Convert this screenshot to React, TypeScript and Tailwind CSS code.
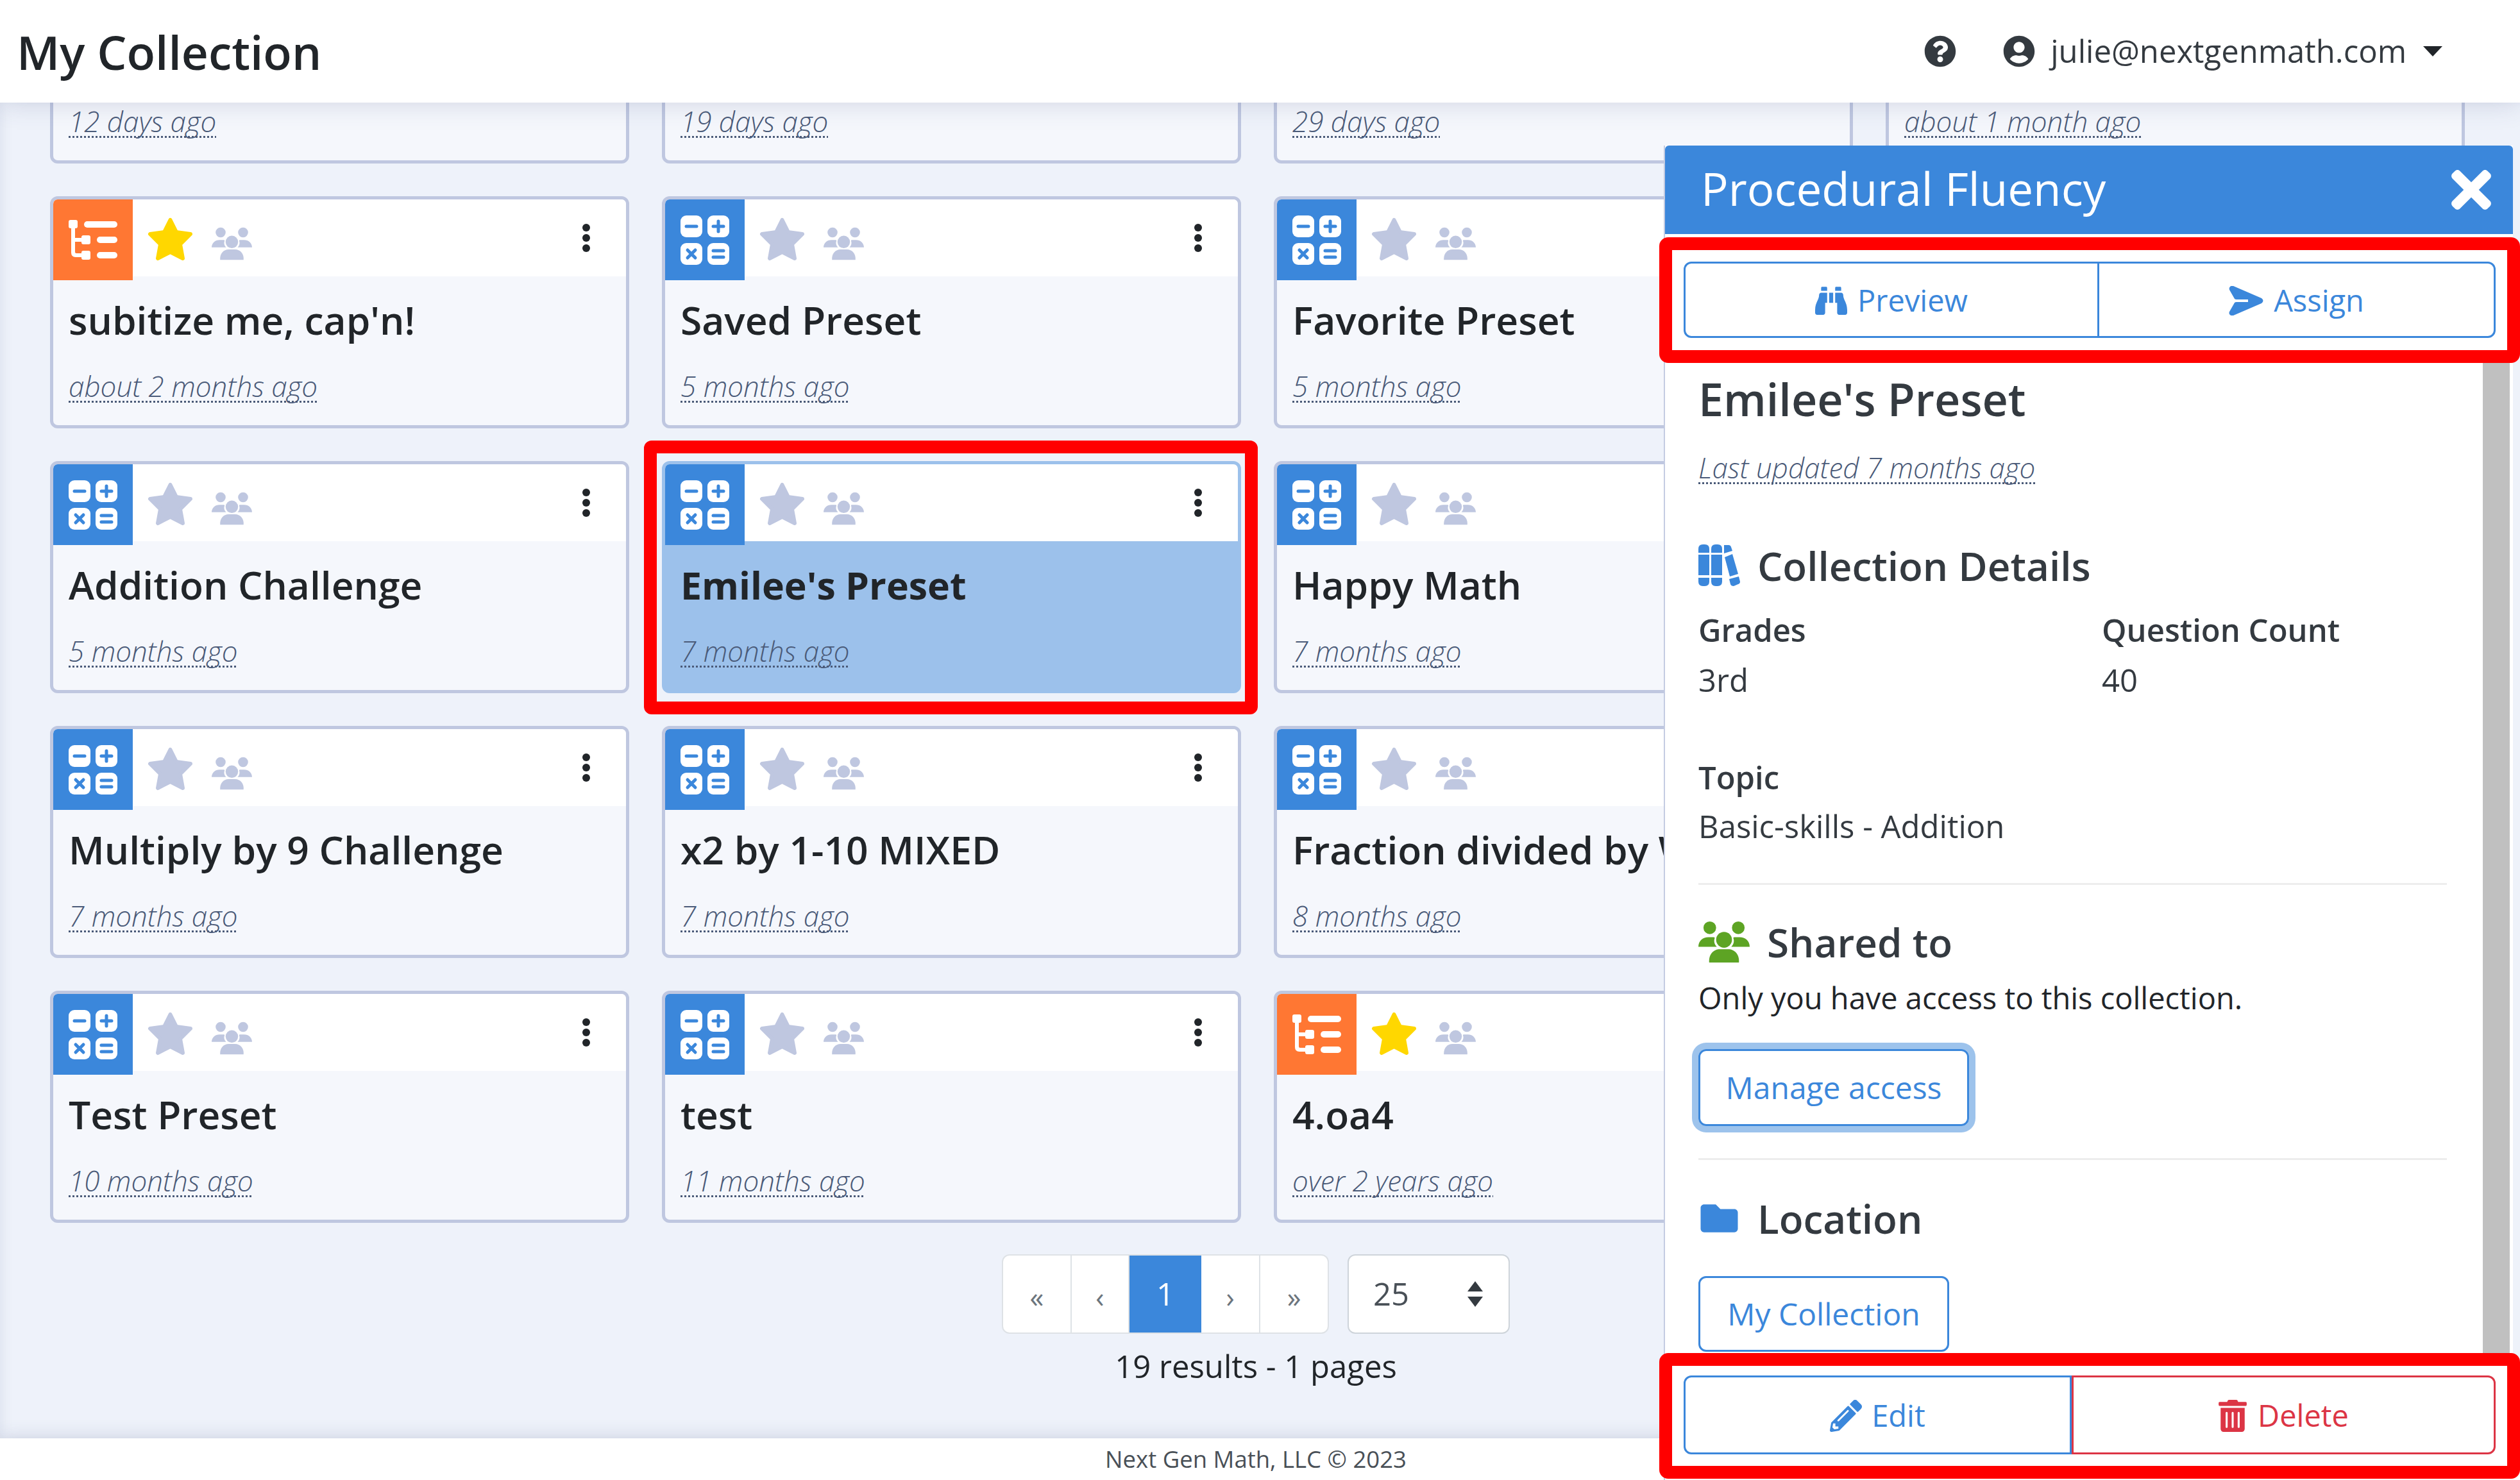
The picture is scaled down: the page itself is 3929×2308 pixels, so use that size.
import { FaBinoculars, FaFolder, FaPencilAlt, FaQuestionCircle, FaTimes, FaTrashAlt, FaUserCircle } from 'react-icons/fa'
import clsx from 'clsx'

type CardData = { title: string; time: string; kind?: 'calc' | 'tree'; fav?: boolean; selected?: boolean }

const CARDS: CardData[] = [
  { title: '', time: '12 days ago' },
  { title: '', time: '19 days ago' },
  { title: '', time: '29 days ago' },
  { title: '', time: 'about 1 month ago' },
  { title: "subitize me, cap'n!", time: 'about 2 months ago', kind: 'tree', fav: true },
  { title: 'Saved Preset', time: '5 months ago' },
  { title: 'Favorite Preset', time: '5 months ago' },
  { title: '', time: '' },
  { title: 'Addition Challenge', time: '5 months ago' },
  { title: "Emilee's Preset", time: '7 months ago', selected: true },
  { title: 'Happy Math', time: '7 months ago' },
  { title: '', time: '' },
  { title: 'Multiply by 9 Challenge', time: '7 months ago' },
  { title: 'x2 by 1-10 MIXED', time: '7 months ago' },
  { title: 'Fraction divided by Whole', time: '8 months ago' },
  { title: '', time: '' },
  { title: 'Test Preset', time: '10 months ago' },
  { title: 'test', time: '11 months ago' },
  { title: '4.oa4', time: 'over 2 years ago', kind: 'tree', fav: true },
]

function CalcIcon() {
  return (
    <svg viewBox="0 0 76 77" className="w-[76px] h-[77px]">
      <rect x="0" y="0" width="34" height="34" rx="9" fill="#fff" />
      <rect x="42" y="0" width="34" height="34" rx="9" fill="#fff" />
      <rect x="0" y="43" width="34" height="34" rx="9" fill="#fff" />
      <rect x="42" y="43" width="34" height="34" rx="9" fill="#fff" />
      <g stroke="#3b87db" strokeWidth="5" strokeLinecap="round">
        <path d="M9 17H25" />
        <path d="M51 17H67M59 9V25" />
        <path d="M11 54L23 66M23 54L11 66" />
        <path d="M51 55H67M51 65H67" />
      </g>
    </svg>
  )
}

function TreeIcon() {
  return (
    <svg viewBox="0 0 76 63" className="w-[76px] h-[63px]" fill="#fff">
      <rect x="0" y="0" width="14" height="13" rx="3" />
      <rect x="20" y="24" width="14" height="14" rx="3" />
      <rect x="20" y="48" width="14" height="14" rx="3" />
      <rect x="24" y="2" width="52" height="10" rx="5" />
      <rect x="44" y="26" width="32" height="10" rx="5" />
      <rect x="44" y="50" width="32" height="10" rx="5" />
      <path d="M4 10H10V28H22V34H10V50Q10 52 12 52H22V58H11Q4 58 4 51Z" />
    </svg>
  )
}

function StarIcon({ fav }: { fav?: boolean }) {
  return (
    <svg viewBox="0 0 71 68" className={clsx('w-[71px] h-[68px]', fav ? 'text-[#ffd700]' : 'text-[#bfc7e0]')}>
      <path
        d="M35.5 4L45 23L67 26L51 42L55 64L35.5 54L16 64L20 42L4 26L26 23Z"
        fill="currentColor"
        stroke="currentColor"
        strokeWidth="6"
        strokeLinejoin="round"
      />
    </svg>
  )
}

function GroupIcon({ className }: { className: string }) {
  return (
    <svg viewBox="0 0 81 65" className={className} fill="currentColor">
      <circle cx="18" cy="10" r="10" />
      <circle cx="63" cy="10" r="10" />
      <circle cx="40.5" cy="29" r="12.5" />
      <path d="M0 40C0 31 7 25 16 25H23C24 25 25 25 26 26C24 31 25 36 29 40Z" />
      <path d="M81 40C81 31 74 25 65 25H58C57 25 56 25 55 26C57 31 56 36 52 40Z" />
      <path d="M17 65C16 52 24 44 34 44H47C57 44 65 52 64 65Z" />
    </svg>
  )
}

function BooksIcon() {
  return (
    <svg viewBox="0 0 65 65" className="w-[65px] h-[65px] shrink-0" fill="#3b87db">
      <path d="M0 13V7Q0 0 7 0H10Q17 0 17 7V13Z" />
      <rect x="0" y="16" width="17" height="32" />
      <path d="M0 52V58Q0 65 7 65H10Q17 65 17 58V52Z" />
      <path d="M20 13V7Q20 0 27 0H30Q37 0 37 7V13Z" />
      <rect x="20" y="16" width="17" height="32" />
      <path d="M20 52V58Q20 65 27 65H30Q37 65 37 58V52Z" />
      <path d="M40 14V1H47Q50 1 51 4L53 10Z" />
      <path d="M41 20L53 15L62 46L49 50Z" />
      <path d="M48 54L63 50L65 58Q65 61 62 62L55 65Q51 65 50 62Z" />
    </svg>
  )
}

function SendIcon() {
  return (
    <svg viewBox="0 0 54 46" className="w-[54px] h-[46px]" fill="currentColor">
      <path d="M2 1Q4 -1 7 0L51 19Q56 23 51 27L7 46Q3 47 1 44Q0 42 1 40L9 26Q10 25 12 25H30V21H12Q10 21 9 20L1 6Q0 3 2 1Z" />
    </svg>
  )
}

function Card({ card }: { card: CardData }) {
  const { title, time, kind = 'calc', fav, selected } = card
  return (
    <div
      className={clsx(
        'relative h-[362px] rounded-[12px] border-[5px]',
        selected ? 'bg-[#9cc1eb] border-[#9cc1eb]' : 'bg-[#f5f7fc] border-[#bfc7e0]'
      )}
    >
      <div className="flex items-start h-[120px] bg-white rounded-t-[7px]">
        <div
          className={clsx(
            'w-[124px] h-[126px] shrink-0 flex items-center justify-center rounded-tl-[7px]',
            kind === 'tree' ? 'bg-[#ff7733]' : 'bg-[#3b87db]'
          )}
        >
          {kind === 'tree' ? <TreeIcon /> : <CalcIcon />}
        </div>
        <div className="ml-[23px] mt-[28px]">
          <StarIcon fav={fav} />
        </div>
        <div className="ml-[29px] mt-[43px]">
          <GroupIcon className="w-[63px] h-[52px] text-[#bfc7e0]" />
        </div>
        <div className="ml-auto mr-[56px] mt-[38px] flex flex-col gap-[4px]">
          <span className="w-[12px] h-[12px] rounded-full bg-[#212529]" />
          <span className="w-[12px] h-[12px] rounded-full bg-[#212529]" />
          <span className="w-[12px] h-[12px] rounded-full bg-[#212529]" />
        </div>
      </div>
      <div className="pl-[24px]">
        <div
          className={clsx(
            'mt-[32px] h-[72px] leading-[72px] whitespace-nowrap text-[#212529]',
            selected ? 'text-[59px] font-bold' : 'text-[60.5px] font-semibold'
          )}
        >
          {title}
        </div>
        <div className="mt-[37px] h-[60px] leading-[60px] whitespace-nowrap">
          <TimeText text={time} />
        </div>
      </div>
      {selected && <div className="absolute -left-[33px] -right-[31px] -top-[37px] -bottom-[38px] border-[20px] border-[#f00] rounded-[12px]" />}
    </div>
  )
}

function TimeText({ text }: { text: string }) {
  return (
    <span className="italic font-light text-[44px] text-[#4a5a78] underline decoration-dotted decoration-[3px] underline-offset-[6px] [text-decoration-skip-ink:none]">
      {text}
    </span>
  )
}

function PageCell({ label, className }: { label: string; className: string }) {
  return (
    <div className={clsx('flex items-center justify-center h-full pt-[8px] text-[44px] text-[#6c757d] border-r-[2.5px] border-[#dee2e6] last:border-r-0', className)}>
      {label}
    </div>
  )
}

function Panel() {
  return (
    <aside className="absolute left-[2594px] right-[11px] top-[227px] bottom-0 flex flex-col bg-white border-l-[2px] border-[#c4cce2]">
      <div className="h-[138px] shrink-0 flex items-center justify-between bg-[#3b87db] rounded-t-[6px] pl-[56px] pr-[20px] text-white">
        <span className="-mt-[5px] text-[71px] leading-none">Procedural Fluency</span>
        <FaTimes className="w-[90px] h-[90px]" />
      </div>
      <div className="shrink-0 pl-[29px] pr-[27px] pt-[43px] pb-[39px]">
        <div className="relative flex h-[119px] rounded-[12px] border-[3px] border-[#3b87db] text-[47px] text-[#3b87db]">
          <div className="w-[645px] pt-[2px] flex items-center justify-center gap-[16px] border-r-[3px] border-[#3b87db]">
            <FaBinoculars className="w-[50px] h-[50px]" />
            Preview
          </div>
          <div className="flex-1 pt-[2px] flex items-center justify-center gap-[16px]">
            <SendIcon />
            Assign
          </div>
          <div className="absolute -left-[41px] -right-[41px] -top-[41px] -bottom-[42px] border-[20px] border-[#f00] rounded-[14px]" />
        </div>
      </div>
      <div className="flex-1 min-h-0 flex overflow-hidden">
        <div className="flex-1 min-w-0 pl-[52px] pr-[56px] text-[#343a40]">
          <h2 className="mt-[24px] text-[70px] leading-[64px] font-semibold">Emilee's Preset</h2>
          <div className="mt-[45px] leading-[60px]">
            <TimeText text="Last updated 7 months ago" />
          </div>
          <div className="mt-[79px] flex items-center gap-[27px]">
            <BooksIcon />
            <h3 className="text-[62px] leading-[64px] font-semibold">Collection Details</h3>
          </div>
          <div className="mt-[38px] grid grid-cols-[629px_1fr] text-[49px] leading-[60px]">
            <div className="font-semibold">Grades</div>
            <div className="font-semibold">Question Count</div>
            <div className="mt-[18px]">3rd</div>
            <div className="mt-[18px]">40</div>
          </div>
          <div className="mt-[92px] text-[49px] leading-[60px] font-semibold">Topic</div>
          <div className="mt-[16px] text-[49px] leading-[60px]">Basic-skills - Addition</div>
          <div className="mt-[59px] h-[3px] bg-[#ededed]" />
          <div className="mt-[56px] flex items-center gap-[27px]">
            <GroupIcon className="w-[80px] h-[66px] shrink-0 text-[#5da424]" />
            <h3 className="text-[62px] leading-[64px] font-semibold">Shared to</h3>
          </div>
          <div className="mt-[24px] text-[47px] leading-[60px] text-[#212529]">Only you have access to this collection.</div>
          <button className="mt-[50px] h-[120px] w-[422px] flex items-center justify-center rounded-[12px] border-[3px] border-[#3b87db] ring-[10px] ring-[#9dc3ec] text-[48px] text-[#3b87db]">
            Manage access
          </button>
          <div className="mt-[50px] h-[3px] bg-[#ededed]" />
          <div className="mt-[59px] flex items-center gap-[27px]">
            <FaFolder className="w-[65px] h-[58px] shrink-0 text-[#3b87db]" />
            <h3 className="text-[62px] leading-[64px] font-semibold">Location</h3>
          </div>
          <button className="mt-[58px] h-[118px] w-[391px] flex items-center justify-center rounded-[12px] border-[3px] border-[#3b87db] text-[48px] text-[#3b87db]">
            My Collection
          </button>
        </div>
        <div className="w-[42px] mr-[5px] shrink-0 bg-[#c0c0c0]" />
      </div>
      <div className="shrink-0 pl-[29px] pr-[27px] pt-[35px] pb-[40px]">
        <div className="relative flex h-[123px] text-[47px]">
          <div className="w-[605px] pt-[2px] flex items-center justify-center gap-[15px] rounded-l-[12px] border-[3px] border-[#3b87db] text-[#3b87db]">
            <FaPencilAlt className="w-[50px] h-[50px]" />
            Edit
          </div>
          <div className="flex-1 pt-[2px] flex items-center justify-center gap-[17px] rounded-r-[12px] border-[3px] border-[#dc3545] text-[#dc3545]">
            <FaTrashAlt className="w-[44px] h-[50px]" />
            Delete
          </div>
          <div className="absolute -left-[38px] -right-[38px] -top-[35px] -bottom-[38px] border-[20px] border-[#f00] rounded-[14px]" />
        </div>
      </div>
    </aside>
  )
}

export default function App() {
  return (
    <div className="relative h-screen w-full flex flex-col overflow-hidden bg-[#eef2fa] [font-family:'Open_Sans','Noto_Sans',sans-serif]">
      <header className="relative z-10 h-[160px] shrink-0 flex items-center bg-white pl-[26px] pr-[121px] shadow-[0_0_40px_rgba(60,70,120,0.2)]">
        <h1 className="text-[73px] leading-none font-semibold text-[#212529]">My Collection</h1>
        <FaQuestionCircle className="ml-auto w-[50px] h-[50px] text-[#343a40]" />
        <FaUserCircle className="ml-[73px] w-[50px] h-[50px] text-[#343a40]" />
        <span className="ml-[24px] text-[49px] text-[#343a40]">julie@nextgenmath.com</span>
        <svg viewBox="0 0 30 16" className="ml-[26px] w-[30px] h-[16px] text-[#212529]" fill="currentColor">
          <path d="M0 0H30L15 16Z" />
        </svg>
      </header>
      <main className="flex-1 min-h-0 overflow-hidden pl-[78px] shadow-[inset_12px_0_20px_-12px_rgba(60,70,120,0.12)]">
        <div className="-mt-[267px] grid grid-cols-[903px_903px_903px_903px] gap-x-[51px] gap-y-[51px]">
          {CARDS.map((c, i) =>
            i % 4 === 3 && i > 3 ? <div key={i} /> : <Card key={i} card={c} />
          )}
        </div>
        <div className="-ml-[78px] pr-[13px]">
          <div className="mt-[49px] flex justify-center gap-[29px]">
            <div className="flex h-[124px] w-[510px] bg-white rounded-[12px] border-[2.5px] border-[#dee2e6] overflow-hidden">
              <PageCell label="«" className="w-[107px]" />
              <PageCell label="‹" className="w-[91px]" />
              <div className="w-[112px] h-full flex items-center justify-center bg-[#3b87db] text-[49px] text-white">1</div>
              <PageCell label="›" className="w-[93px]" />
              <PageCell label="»" className="w-[105px]" />
            </div>
            <div className="flex items-center justify-between h-[124px] w-[253px] bg-white rounded-[12px] border-[2.5px] border-[#ced4da] pl-[38px] pr-[40px] text-[49px] text-[#495057]">
              25
              <svg viewBox="0 0 24 40" className="w-[24px] h-[40px]" fill="#343a40">
                <path d="M12 0L24 16H0Z" />
                <path d="M12 40L24 24H0Z" />
              </svg>
            </div>
          </div>
          <div className="mt-[20px] text-center text-[49px] leading-[60px] text-[#212529]">19 results - 1 pages</div>
        </div>
      </main>
      <footer className="relative z-10 h-[65px] shrink-0 flex items-center justify-center bg-white pr-[13px] text-[36.5px] text-[#495057] shadow-[0_0_30px_rgba(60,70,120,0.2)]">
        Next Gen Math, LLC © 2023
      </footer>
      <div className="absolute inset-0 z-20 pointer-events-none">
        <Panel />
      </div>
    </div>
  )
}
